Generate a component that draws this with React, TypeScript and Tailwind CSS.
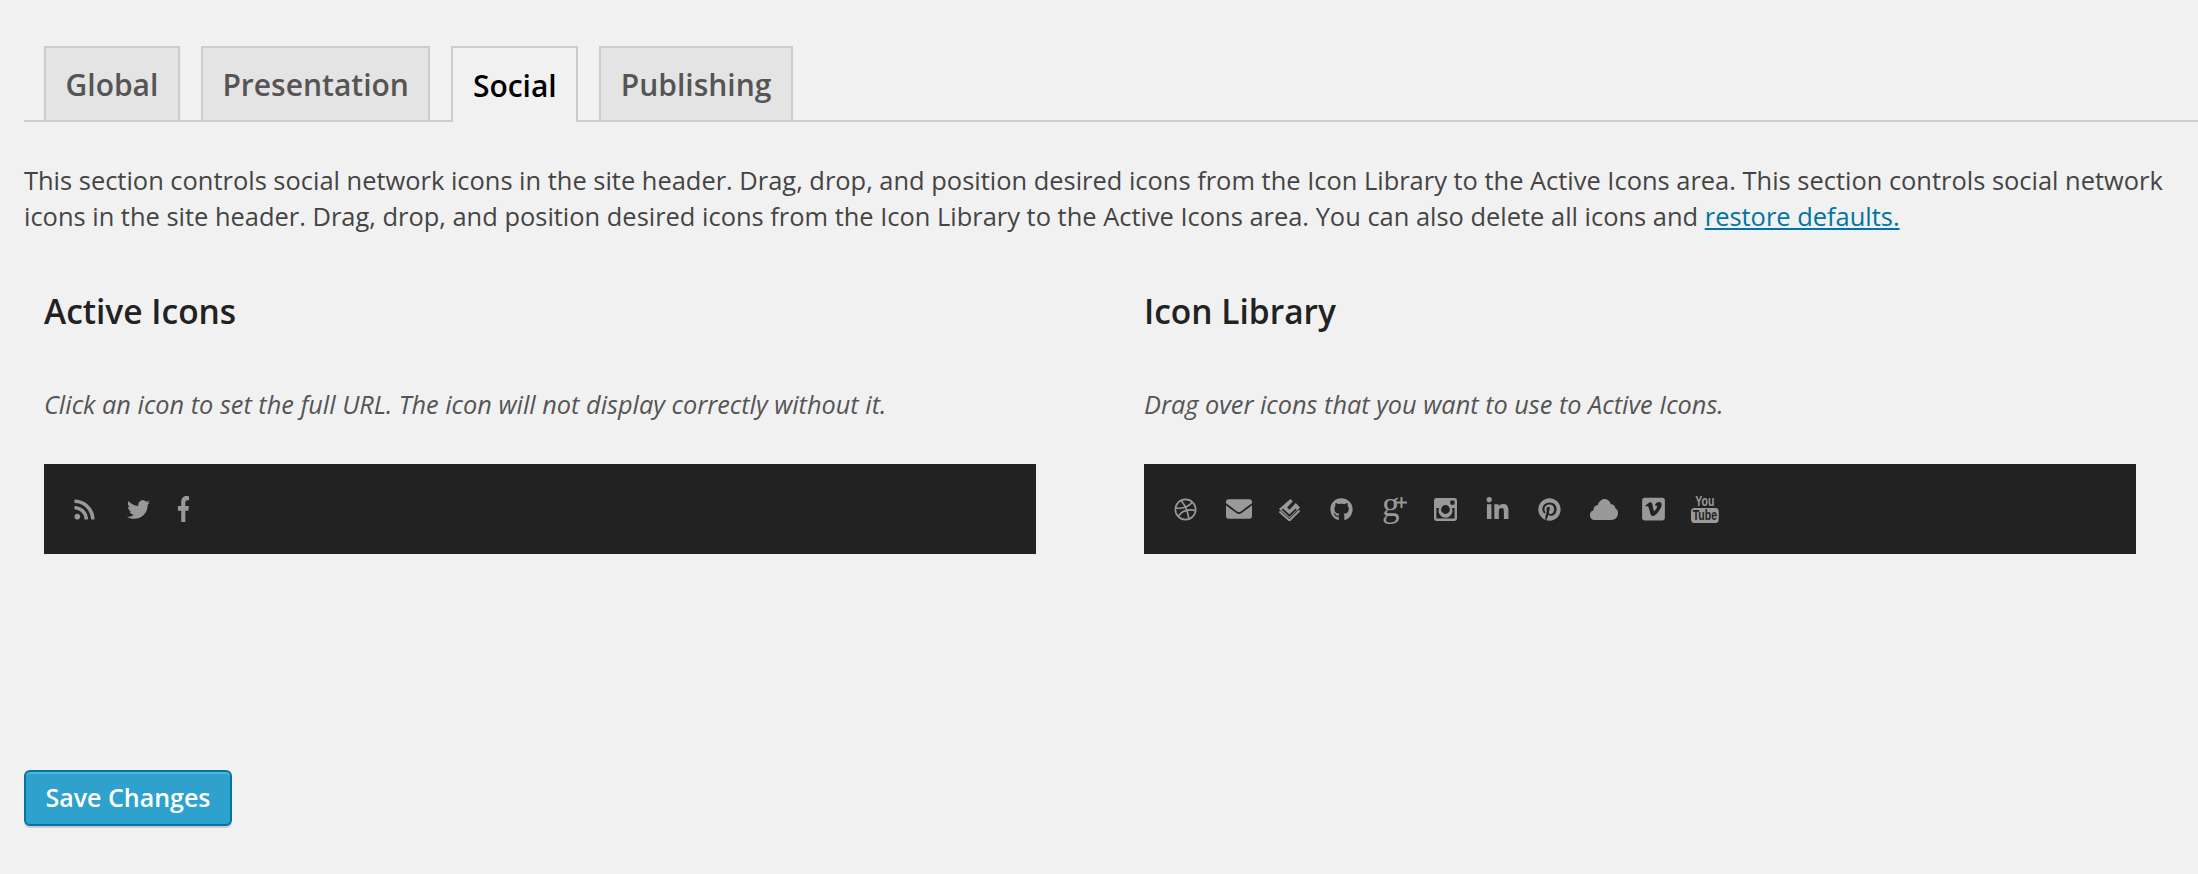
import React from 'react';
import {
  FaRss,
  FaTwitter,
  FaFacebookF,
  FaEnvelope,
  FaGithub,
  FaLinkedinIn,
  FaPinterest,
  FaVimeoSquare,
} from 'react-icons/fa';

const tabs = ['Global', 'Presentation', 'Social', 'Publishing'];

const copy =
  'This section controls social network icons in the site header. Drag, drop, and position desired icons from the Icon Library to the Active Icons area. This section controls social network icons in the site header. Drag, drop, and position desired icons from the Icon Library to the Active Icons area. You can also delete all icons and ';

// hand drawn icons, the packages have no close match for these
const Dribbble = () => (
  <svg viewBox="0 0 24 24" className="h-[23px] w-[23px]" fill="none" stroke="currentColor" strokeWidth="1.7">
    <circle cx="12" cy="12" r="10.6" />
    <path d="M7.5 2.6c3.4 4 6.6 10 8 18.6" />
    <path d="M1.6 10.6c6.4.6 13-1 17.6-6.2" />
    <path d="M4.4 19.4c3.4-5.600 9.600-8.200 18.200-6.400" />
  </svg>
);

const Forrst = () => (
  <svg viewBox="0 0 24 24" className="h-[23px] w-[23px]" fill="none">
    <path d="M1 11.500 13 1l2.500 2.500-6 6.300 2.500 2.500L18.500 5.200 23 10 12 21Z" fill="currentColor" />
    <path d="M4.500 11.500 12 18.500l7-7" stroke="#222" strokeWidth="1.800" />
    <path d="M1.500 14 12 23.500 22.500 13" stroke="currentColor" strokeWidth="2" />
  </svg>
);

const Instagram = () => (
  <svg viewBox="0 0 24 24" className="h-[23px] w-[23px]">
    <path
      fillRule="evenodd"
      fill="currentColor"
      d="M2.500 0h19A2.500 2.500 0 0 1 24 2.500v19a2.500 2.500 0 0 1-2.500 2.500h-19A2.500 2.500 0 0 1 0 21.500v-19A2.500 2.500 0 0 1 2.500 0ZM2.500 10.500v10.300c0 .4.300.7.700.7h17.600c.4 0 .7-.3.700-.7V10.500h-2.900a7.200 7.200 0 1 1-13.200 0ZM12 7.400a4.600 4.600 0 1 0 0 9.200 4.600 4.600 0 0 0 0-9.200ZM18 2.500c-.6 0-1 .4-1 1v2.500c0 .6.400 1 1 1h2.500c.6 0 1-.4 1-1V3.500c0-.6-.4-1-1-1Z"
    />
  </svg>
);

const Cloud = () => (
  <svg viewBox="0 0 28 21" className="h-[21px] w-[28px]" fill="currentColor">
    <path d="M5 21a5 5 0 0 1-1.500-9.800 5.200 5.200 0 0 1 4.300-5.200C9 2.400 11.600 0 14.300 0c3.300 0 5.800 2.200 6.400 5.200 2.600-.3 4.600 1.500 4.600 4 1.600.7 2.700 2.500 2.700 4.800 0 3.800-2.700 7-6.500 7Z" />
  </svg>
);

const GooglePlus = () => (
  <span className="relative block h-[25px] w-[25px]">
    <span className="absolute left-0 top-[-10px] font-['Liberation_Serif',serif] text-[35px] leading-[35px]">g</span>
    <svg viewBox="0 0 11 11" className="absolute top-0 left-[14px] h-[11px] w-[11px]" fill="currentColor">
      <path d="M4.500 0h2v4.500H11v2H6.500V11h-2V6.500H0v-2h4.500Z" />
    </svg>
  </span>
);

const YouTube = () => (
  <span className="flex w-[29px] origin-left scale-x-75 flex-col items-center font-['Liberation_Sans',sans-serif]">
    <span className="text-[14px] leading-[12px] font-bold">You</span>
    <span className="mt-[1px] rounded-[4px] bg-[#999] px-[2px] text-[14px] leading-[15px] font-bold text-[#222]">Tube</span>
  </span>
);

const activeIcons = [
  <FaRss key="rss" className="ml-[-1px] h-[23px] w-[23px]" />,
  <FaTwitter key="twitter" className="ml-[1px] h-[23px] w-[23px]" />,
  <FaFacebookF key="facebook" preserveAspectRatio="none" className="ml-[-1px] h-[26px] w-[13px]" />,
];

const libraryIcons = [
  <Dribbble key="dribbble" />,
  <FaEnvelope key="mail" className="h-[26px] w-[26px]" />,
  <Forrst key="forrst" />,
  <FaGithub key="github" className="h-[23px] w-[23px]" />,
  <GooglePlus key="gplus" />,
  <Instagram key="instagram" />,
  <FaLinkedinIn key="linkedin" className="ml-[-1px] h-[25px] w-[25px]" />,
  <FaPinterest key="pinterest" className="h-[23px] w-[23px]" />,
  <Cloud key="cloud" />,
  <FaVimeoSquare key="vimeo" className="h-[26px] w-[23px]" />,
  <YouTube key="youtube" />,
];

const IconColumn = ({ title, hint, icons }: { title: string; hint: string; icons: React.ReactNode[] }) => (
  <div className="w-[992px]">
    <h3 className="text-[33.500px] leading-[40px] font-semibold text-[#222]">{title}</h3>
    <p className="mt-[53px] text-[25.300px] leading-[40px] text-[#555] italic">{hint}</p>
    <div className="mt-[40px] flex h-[90px] items-center bg-[#222] pl-[30px] text-[#999]">
      {icons.map((icon, i) => (
        <div key={i} className="flex w-[52px] items-center justify-start">
          {icon}
        </div>
      ))}
    </div>
  </div>
);

export default function App() {
  return (
    <div className="min-h-[874px] bg-[#f1f1f1] pt-[46px] pl-6 font-['Open_Sans',sans-serif]">
      <div className="flex h-[76px] items-end gap-[21px] border-b-2 border-[#ccc] pl-5">
        {tabs.map((tab) => {
          const active = tab === 'Social';
          return (
            <div
              key={tab}
              className={
                active
                  ? 'mb-[-2px] flex h-[76px] items-center border-2 border-b-0 border-[#ccc] bg-[#f1f1f1] px-[19.500px] text-[30px] font-semibold text-black'
                  : 'flex h-[74px] items-center border-2 border-b-0 border-[#ccc] bg-[#e4e4e4] px-[19.500px] text-[30px] font-semibold text-[#555]'
              }
            >
              {tab}
            </div>
          );
        })}
      </div>

      <p className="mt-[40px] w-[2150px] text-[25.450px] leading-[36px] text-[#444]">
        {copy}
        <a className="text-[#0074a2] underline">restore defaults.</a>
      </p>

      <div className="mt-[57px] flex gap-[108px] pl-5">
        <IconColumn
          title="Active Icons"
          hint="Click an icon to set the full URL. The icon will not display correctly without it."
          icons={activeIcons}
        />
        <IconColumn
          title="Icon Library"
          hint="Drag over icons that you want to use to Active Icons."
          icons={libraryIcons}
        />
      </div>

      <button className="mt-[216px] h-[56px] w-[208px] rounded-[6px] border-2 border-[#0074a2] bg-[#2ea2cc] text-[25px] font-semibold text-white shadow-[inset_0_2px_0_rgba(120,200,230,0.5),0_2px_0_rgba(0,0,0,0.15)]">
        Save Changes
      </button>
    </div>
  );
}
